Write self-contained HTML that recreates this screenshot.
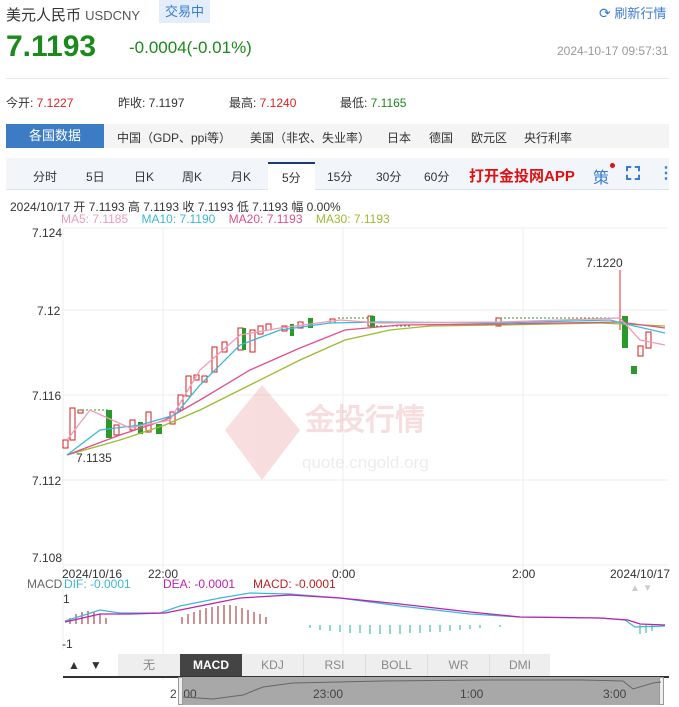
<!DOCTYPE html>
<html><head><meta charset="utf-8"><style>
*{margin:0;padding:0;box-sizing:border-box}
body{width:679px;height:707px;background:#fff;font-family:"Liberation Sans","Noto Sans CJK SC",sans-serif;position:relative;overflow:hidden;color:#333}
.a{position:absolute;white-space:nowrap}
</style></head><body>
<div class="a" style="left:6px;top:4px;font-size:15px;color:#333">美元人民币 <span style="font-size:13px;color:#555">USDCNY</span></div>
<div class="a" style="left:159px;top:0px;width:51px;height:23px;background:#e3eefa;color:#3a7bd5;font-size:13px;line-height:23px;text-align:center">交易中</div>
<div class="a" style="left:599px;top:3px;font-size:13px;color:#3a7bd5"><span style="font-size:14px">⟳</span> 刷新行情</div>
<div class="a" style="left:6px;top:30px;font-size:30px;font-weight:bold;color:#1a8a1a">7.1193</div>
<div class="a" style="left:129px;top:38px;font-size:17px;color:#1a8a1a">-0.0004(-0.01%)</div>
<div class="a" style="left:557px;top:44px;font-size:12px;color:#999">2024-10-17 09:57:31</div>
<div class="a" style="left:6px;top:78px;width:663px;height:1px;background:#e8e8e8"></div>
<div class="a" style="left:6px;top:94px;font-size:12px">今开: <span style="color:#e02020">7.1227</span></div>
<div class="a" style="left:118px;top:94px;font-size:12px">昨收: 7.1197</div>
<div class="a" style="left:229px;top:94px;font-size:12px">最高: <span style="color:#e02020">7.1240</span></div>
<div class="a" style="left:340px;top:94px;font-size:12px">最低: <span style="color:#1a8a1a">7.1165</span></div>
<div class="a" style="left:6px;top:124px;width:98px;height:24px;background:#3c7cc4;color:#fff;font-size:13px;line-height:24px;text-align:center">各国数据</div>
<div class="a" style="left:104px;top:124px;width:565px;height:24px;background:#f4f4f4"></div>
<div class="a" style="left:117px;top:129px;font-size:12px">中国（GDP、ppi等）</div>
<div class="a" style="left:250px;top:129px;font-size:12px">美国（非农、失业率）</div>
<div class="a" style="left:387px;top:129px;font-size:12px">日本</div>
<div class="a" style="left:429px;top:129px;font-size:12px">德国</div>
<div class="a" style="left:471px;top:129px;font-size:12px">欧元区</div>
<div class="a" style="left:524px;top:129px;font-size:12px">央行利率</div>
<div class="a" style="left:6px;top:158px;width:663px;height:32px;background:#f2f6fb;border-bottom:1px solid #dde4ee"></div>
<div class="a" style="left:268px;top:162px;width:47px;height:29px;background:#fff;border-top:2px solid #1a3a7a"></div>
<div class="a" style="left:33px;top:168px;font-size:12px;word-spacing:0">分时</div>
<div class="a" style="left:86px;top:168px;font-size:12px">5日</div>
<div class="a" style="left:134px;top:168px;font-size:12px">日K</div>
<div class="a" style="left:182px;top:168px;font-size:12px">周K</div>
<div class="a" style="left:231px;top:168px;font-size:12px">月K</div>
<div class="a" style="left:282px;top:169px;font-size:12px">5分</div>
<div class="a" style="left:327px;top:168px;font-size:12px">15分</div>
<div class="a" style="left:376px;top:168px;font-size:12px">30分</div>
<div class="a" style="left:424px;top:168px;font-size:12px">60分</div>
<div class="a" style="left:469px;top:165px;font-size:15px;font-weight:bold;color:#e01010">打开金投网APP</div>
<div class="a" style="left:593px;top:164px;font-size:16px;color:#3a7bd5">策</div>
<div class="a" style="left:610px;top:163px;width:5px;height:5px;border-radius:50%;background:#e01010"></div>
<div class="a" style="left:626px;top:166px;width:14px;height:14px;border:2px dashed #3a7bd5"></div>
<div class="a" style="left:658px;top:163px;font-size:16px;color:#3a7bd5;font-weight:bold">⋮</div>
<div class="a" style="left:10px;top:198px;font-size:12px">2024/10/17 开 7.1193 高 7.1193 收 7.1193 低 7.1193 幅 0.00%</div>
<div class="a" style="left:61px;top:212px;font-size:12px"><span style="color:#f19ab8">MA5: 7.1185</span>&nbsp;&nbsp;&nbsp; <span style="color:#3bb8d8">MA10: 7.1190</span>&nbsp;&nbsp;&nbsp; <span style="color:#e0508a">MA20: 7.1193</span>&nbsp;&nbsp;&nbsp; <span style="color:#9cbb30">MA30: 7.1193</span></div>
<svg class="a" style="left:0;top:225px" width="679" height="482" viewBox="0 225 679 482" font-family="Liberation Sans" font-size="12">
<g stroke="#eee" stroke-width="1">
<line x1="63" y1="228" x2="668" y2="228"/><line x1="63" y1="310" x2="668" y2="310"/><line x1="63" y1="395" x2="668" y2="395"/><line x1="63" y1="480" x2="668" y2="480"/><line x1="63" y1="565" x2="668" y2="565"/>
<line x1="163" y1="228" x2="163" y2="680"/><line x1="343" y1="228" x2="343" y2="680"/><line x1="523" y1="228" x2="523" y2="680"/><line x1="63" y1="228" x2="63" y2="650"/>
</g>
<g fill="#333"><text x="32" y="237">7.124</text><text x="37" y="315">7.12</text><text x="32" y="400">7.116</text><text x="32" y="485">7.112</text><text x="32" y="562">7.108</text>
<text x="76" y="462">7.1135</text><text x="586" y="267">7.1220</text>
<text x="62" y="578">2024/10/16</text><text x="148" y="578">22:00</text><text x="332" y="578">0:00</text><text x="512" y="578">2:00</text><text x="610" y="578">2024/10/17</text></g>
<g opacity="0.15"><polygon points="262,385 300,430 262,480 225,430" fill="#d02020"/><text x="305" y="430" font-size="30" fill="#d02020" font-weight="bold">金投行情</text><text x="302" y="468" font-size="17" fill="#888">quote.cngold.org</text></g>
<line x1="620" y1="270" x2="620" y2="330" stroke="#e03030"/>
<g stroke="#d02020" fill="#fff" stroke-width="1">
<rect x="63" y="440" width="5" height="8"/><rect x="70" y="408" width="5" height="32"/><rect x="78" y="410" width="5" height="3"/><rect x="114" y="425" width="5" height="10"/><rect x="130" y="420" width="5" height="10"/><rect x="146" y="412" width="5" height="20"/><rect x="170" y="412" width="5" height="12"/><rect x="178" y="395" width="5" height="15"/><rect x="186" y="376" width="5" height="20"/><rect x="194" y="375" width="5" height="5"/><rect x="202" y="376" width="5" height="6"/><rect x="212" y="347" width="5" height="25"/><rect x="222" y="342" width="5" height="10"/><rect x="238" y="328" width="5" height="22"/><rect x="250" y="330" width="5" height="22"/><rect x="258" y="326" width="5" height="8"/><rect x="266" y="324" width="5" height="6"/><rect x="282" y="326" width="5" height="5"/><rect x="298" y="322" width="5" height="6"/><rect x="330" y="319" width="5" height="4"/><rect x="368" y="316" width="5" height="10"/><rect x="496" y="318" width="5" height="8"/><rect x="646" y="332" width="5" height="16"/><rect x="638" y="346" width="5" height="10"/></g>
<g fill="#2a9a2a"><rect x="106" y="410" width="6" height="28"/><rect x="138" y="422" width="5" height="12"/><rect x="156" y="424" width="6" height="10"/><rect x="242" y="328" width="4" height="22"/><rect x="290" y="324" width="4" height="12"/><rect x="308" y="318" width="5" height="10"/><rect x="370" y="316" width="5" height="12"/><rect x="622" y="316" width="6" height="32"/><rect x="631" y="366" width="6" height="8"/></g>
<g stroke="#2a9a2a" stroke-dasharray="2,2"><line x1="78" y1="410" x2="108" y2="410"/><line x1="338" y1="318" x2="370" y2="318"/><line x1="372" y1="326" x2="410" y2="326"/><line x1="500" y1="318" x2="620" y2="318"/></g>
<g fill="none" stroke-width="1.3">
<polyline stroke="#9cbb30" points="67,455 120,440 165,425 200,410 250,385 300,360 345,340 390,330 430,326 500,325 600,323 665,326"/>
<polyline stroke="#e0508a" points="67,455 120,435 165,420 200,400 250,370 300,348 345,330 400,325 500,324 620,322 665,328"/>
<polyline stroke="#3bb8d8" points="67,455 100,430 140,425 175,415 200,385 240,345 280,330 330,323 380,322 500,323 610,320 630,325 665,333"/>
<polyline stroke="#f19ab8" points="67,440 90,410 130,428 170,420 200,370 240,335 280,328 340,320 380,323 500,322 620,318 640,340 665,345"/>
</g>
<text x="27" y="588" fill="#666">MACD</text><text x="64" y="588" fill="#3bb8d8">DIF: -0.0001</text><text x="163" y="588" fill="#c020b0">DEA: -0.0001</text><text x="253" y="588" fill="#c02020">MACD: -0.0001</text>
<text x="63" y="603" fill="#333">1</text><text x="62" y="648" fill="#333">-1</text>
<g stroke="#a02020"><line x1="70" y1="618" x2="70" y2="624"/><line x1="76" y1="614" x2="76" y2="624"/><line x1="82" y1="612" x2="82" y2="624"/><line x1="88" y1="611" x2="88" y2="624"/><line x1="94" y1="612" x2="94" y2="624"/><line x1="100" y1="614" x2="100" y2="624"/><line x1="106" y1="618" x2="106" y2="624"/><line x1="182" y1="617" x2="182" y2="624"/><line x1="188" y1="614" x2="188" y2="624"/><line x1="194" y1="612" x2="194" y2="624"/><line x1="200" y1="610" x2="200" y2="624"/><line x1="206" y1="608" x2="206" y2="624"/><line x1="212" y1="607" x2="212" y2="624"/><line x1="218" y1="606" x2="218" y2="624"/><line x1="224" y1="605" x2="224" y2="624"/><line x1="230" y1="605" x2="230" y2="624"/><line x1="236" y1="606" x2="236" y2="624"/><line x1="242" y1="608" x2="242" y2="624"/><line x1="248" y1="610" x2="248" y2="624"/><line x1="254" y1="612" x2="254" y2="624"/><line x1="260" y1="614" x2="260" y2="624"/><line x1="266" y1="617" x2="266" y2="624"/></g>
<g stroke="#20b090"><line x1="310" y1="625" x2="310" y2="628"/><line x1="320" y1="625" x2="320" y2="630"/><line x1="330" y1="625" x2="330" y2="631"/><line x1="340" y1="625" x2="340" y2="632"/><line x1="350" y1="625" x2="350" y2="633"/><line x1="360" y1="625" x2="360" y2="633"/><line x1="370" y1="625" x2="370" y2="634"/><line x1="380" y1="625" x2="380" y2="634"/><line x1="390" y1="625" x2="390" y2="634"/><line x1="400" y1="625" x2="400" y2="634"/><line x1="410" y1="625" x2="410" y2="633"/><line x1="420" y1="625" x2="420" y2="633"/><line x1="430" y1="625" x2="430" y2="632"/><line x1="440" y1="625" x2="440" y2="632"/><line x1="450" y1="625" x2="450" y2="631"/><line x1="460" y1="625" x2="460" y2="630"/><line x1="470" y1="625" x2="470" y2="629"/><line x1="480" y1="625" x2="480" y2="628"/><line x1="500" y1="625" x2="500" y2="627"/><line x1="640" y1="625" x2="640" y2="634"/><line x1="646" y1="625" x2="646" y2="633"/><line x1="652" y1="625" x2="652" y2="631"/></g>
<g fill="none" stroke-width="1.3">
<polyline stroke="#3bb8d8" points="65,621 100,610 120,613 160,613 180,606 220,598 250,593 290,594 340,598 400,606 470,614 520,617 600,618 625,620 635,627 665,626"/>
<polyline stroke="#c020b0" points="65,622 100,614 130,614 165,613 200,606 240,598 290,595 340,598 400,604 470,612 520,617 600,618 628,620 640,624 665,625"/>
</g>
<text x="630" y="591" fill="#ccc" font-size="10">▲ ▼</text>
</svg>
<div class="a" style="left:63px;top:654px;width:54px;height:22px;font-size:12px;line-height:22px;padding-left:5px">▲&nbsp;&nbsp; ▼</div>
<div class="a" style="left:118px;top:654px;width:432px;height:22px;background:#eee;font-size:12px;line-height:22px;color:#888;display:flex">
<span style="width:62px;text-align:center">无</span><span style="width:62px;text-align:center;background:#444;color:#fff;font-weight:bold">MACD</span><span style="width:62px;text-align:center;border-right:1px solid #ddd">KDJ</span><span style="width:62px;text-align:center;border-right:1px solid #ddd">RSI</span><span style="width:62px;text-align:center;border-right:1px solid #ddd">BOLL</span><span style="width:62px;text-align:center;border-right:1px solid #ddd">WR</span><span style="width:60px;text-align:center">DMI</span></div>
<div class="a" style="left:63px;top:676px;width:606px;height:2px;background:#333"></div>
<div class="a" style="left:183px;top:677px;width:478px;height:28px;background:#a8a8a8"></div>
<div class="a" style="left:178px;top:677px;width:5px;height:28px;background:#eee;border:1px solid #999"></div>
<div class="a" style="left:659px;top:677px;width:5px;height:28px;background:#eee;border:1px solid #999"></div>
<div class="a" style="left:170px;top:687px;font-size:12px;color:#444">2&nbsp; 00</div>
<div class="a" style="left:313px;top:687px;font-size:12px;color:#444">23:00</div>
<div class="a" style="left:460px;top:687px;font-size:12px;color:#444">1:00</div>
<div class="a" style="left:603px;top:687px;font-size:12px;color:#444">3:00</div>
<svg class="a" style="left:183px;top:677px" width="478" height="28"><polyline fill="none" stroke="#666" points="0,20 30,22 60,18 80,10 110,6 200,4 300,3 400,3 440,4 450,12 470,6 478,5"/></svg>
</body></html>
